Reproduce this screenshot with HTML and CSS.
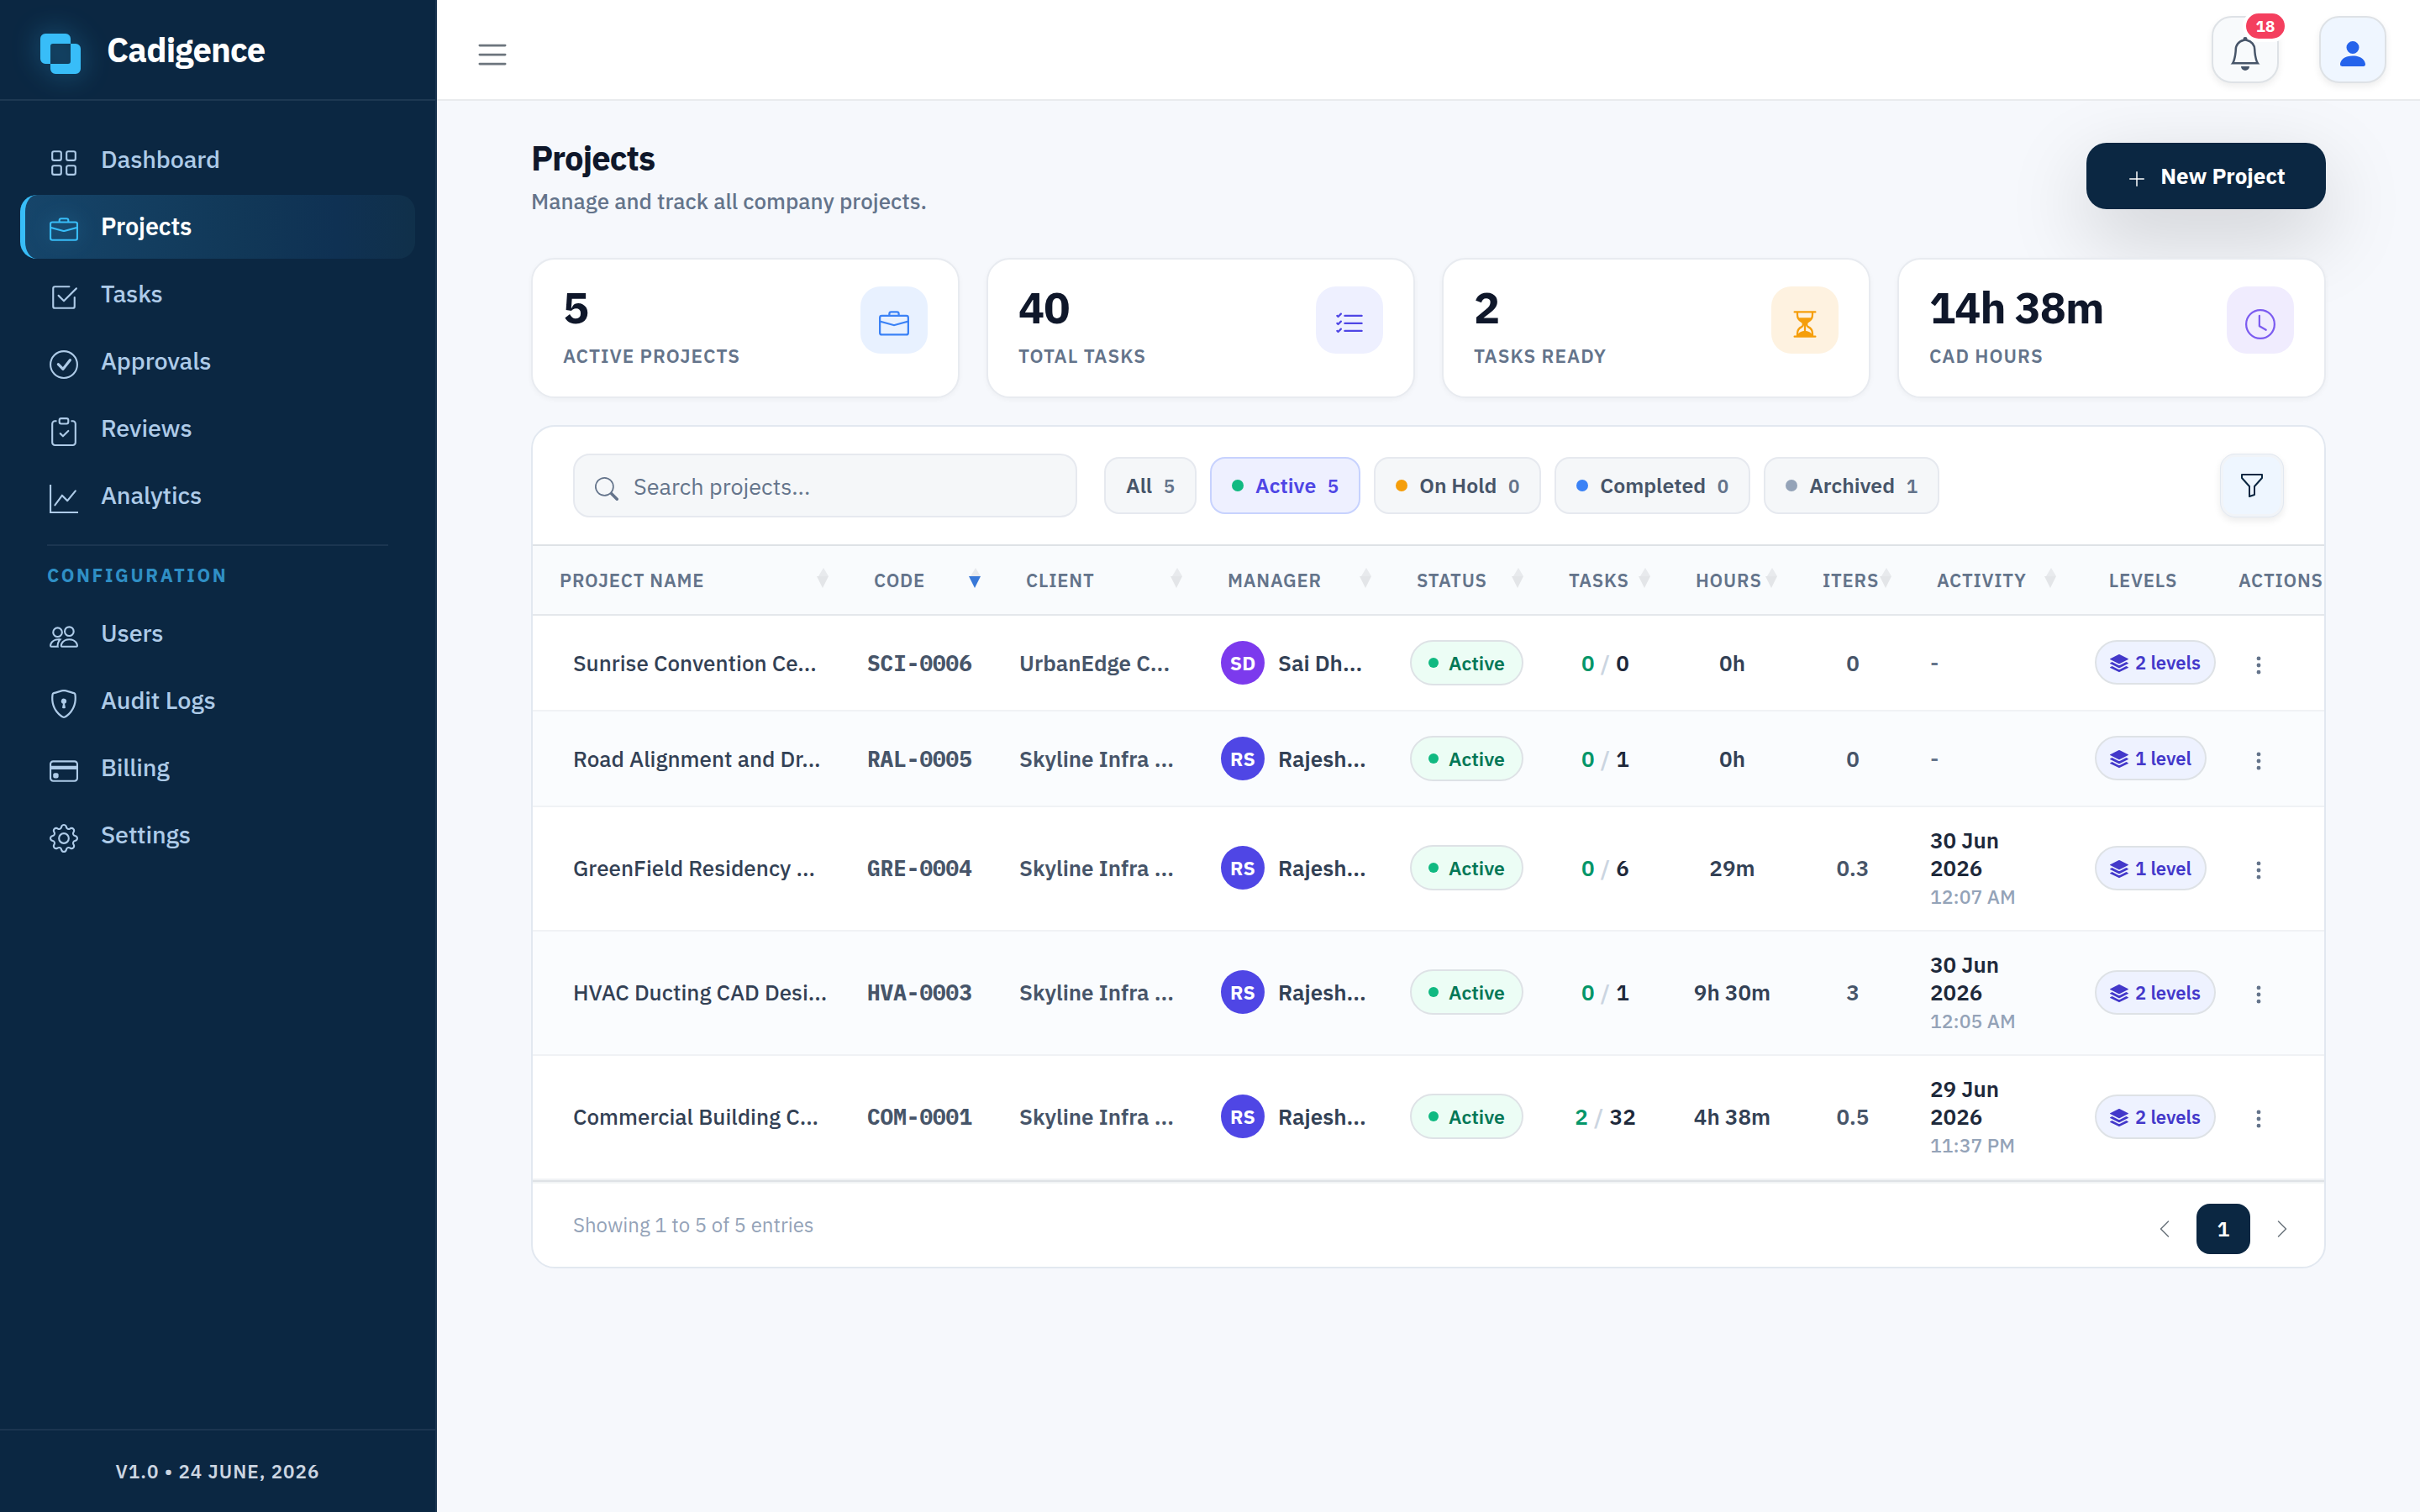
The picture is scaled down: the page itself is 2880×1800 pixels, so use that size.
FILE: index.html
```html
<!DOCTYPE html>
<html lang="en">
<head>
  <meta charset="UTF-8">
  <title>Cadigence - Projects</title>
  <link rel="stylesheet" href="styles.css">
</head>
<body>
  <!-- icon sprite -->
  <svg class="sprite" width="0" height="0">
    <symbol id="i-logo" viewBox="0 0 16 16"><path d="M0 2a2 2 0 0 1 2-2h8a2 2 0 0 1 2 2v2h2a2 2 0 0 1 2 2v8a2 2 0 0 1-2 2H6a2 2 0 0 1-2-2v-2H2a2 2 0 0 1-2-2zm12 2H5a1 1 0 0 0-1 1v7h7a1 1 0 0 0 1-1z"/></symbol>
    <symbol id="i-grid" viewBox="0 0 16 16"><path d="M1 2.5A1.5 1.5 0 0 1 2.5 1h3A1.5 1.5 0 0 1 7 2.5v3A1.5 1.5 0 0 1 5.5 7h-3A1.5 1.5 0 0 1 1 5.5zM2.5 2a.5.5 0 0 0-.5.5v3a.5.5 0 0 0 .5.5h3a.5.5 0 0 0 .5-.5v-3a.5.5 0 0 0-.5-.5zm6.5.5A1.5 1.5 0 0 1 10.5 1h3A1.5 1.5 0 0 1 15 2.5v3A1.5 1.5 0 0 1 13.5 7h-3A1.5 1.5 0 0 1 9 5.5zm1.5-.5a.5.5 0 0 0-.5.5v3a.5.5 0 0 0 .5.5h3a.5.5 0 0 0 .5-.5v-3a.5.5 0 0 0-.5-.5zM1 10.5A1.5 1.5 0 0 1 2.5 9h3A1.5 1.5 0 0 1 7 10.5v3A1.5 1.5 0 0 1 5.5 15h-3A1.5 1.5 0 0 1 1 13.5zm1.5-.5a.5.5 0 0 0-.5.5v3a.5.5 0 0 0 .5.5h3a.5.5 0 0 0 .5-.5v-3a.5.5 0 0 0-.5-.5zm6.5.5A1.5 1.5 0 0 1 10.5 9h3a1.5 1.5 0 0 1 1.5 1.5v3a1.5 1.5 0 0 1-1.5 1.5h-3A1.5 1.5 0 0 1 9 13.5zm1.5-.5a.5.5 0 0 0-.5.5v3a.5.5 0 0 0 .5.5h3a.5.5 0 0 0 .5-.5v-3a.5.5 0 0 0-.5-.5z"/></symbol>
    <symbol id="i-briefcase" viewBox="0 0 16 16"><path d="M6.5 1A1.5 1.5 0 0 0 5 2.5V3H1.5A1.5 1.5 0 0 0 0 4.5v8A1.5 1.5 0 0 0 1.5 14h13a1.5 1.5 0 0 0 1.5-1.5v-8A1.5 1.5 0 0 0 14.5 3H11v-.5A1.5 1.5 0 0 0 9.5 1zm0 1h3a.5.5 0 0 1 .5.5V3H6v-.5a.5.5 0 0 1 .5-.5m1.886 6.914L15 7.151V12.5a.5.5 0 0 1-.5.5h-13a.5.5 0 0 1-.5-.5V7.15l6.614 1.764a1.5 1.5 0 0 0 .772 0M1.5 4h13a.5.5 0 0 1 .5.5v1.616L8.129 7.948a.5.5 0 0 1-.258 0L1 6.116V4.5a.5.5 0 0 1 .5-.5"/></symbol>
    <symbol id="i-check-square" viewBox="0 0 16 16"><path d="M3 14.5A1.5 1.5 0 0 1 1.5 13V3A1.5 1.5 0 0 1 3 1.5h8a.5.5 0 0 1 0 1H3a.5.5 0 0 0-.5.5v10a.5.5 0 0 0 .5.5h10a.5.5 0 0 0 .5-.5V8a.5.5 0 0 1 1 0v5a1.5 1.5 0 0 1-1.5 1.5z"/><path d="m8.354 10.354 7-7a.5.5 0 0 0-.708-.708L8 9.293 5.354 6.646a.5.5 0 1 0-.708.708l3 3a.5.5 0 0 0 .708 0"/></symbol>
    <symbol id="i-check-circle" viewBox="0 0 16 16"><path d="M8 15A7 7 0 1 1 8 1a7 7 0 0 1 0 14m0 1A8 8 0 1 0 8 0a8 8 0 0 0 0 16"/><path d="m10.97 4.97-.02.022-3.473 4.425-2.093-2.094a.75.75 0 0 0-1.06 1.06L6.97 11.03a.75.75 0 0 0 1.079-.02l3.992-4.99a.75.75 0 0 0-1.071-1.05"/></symbol>
    <symbol id="i-clipboard" viewBox="0 0 16 16"><path fill-rule="evenodd" d="M10.854 7.146a.5.5 0 0 1 0 .708l-3 3a.5.5 0 0 1-.708 0l-1.5-1.5a.5.5 0 1 1 .708-.708L7.5 9.793l2.646-2.647a.5.5 0 0 1 .708 0"/><path d="M4 1.5H3a2 2 0 0 0-2 2V14a2 2 0 0 0 2 2h10a2 2 0 0 0 2-2V3.5a2 2 0 0 0-2-2h-1v1h1a1 1 0 0 1 1 1V14a1 1 0 0 1-1 1H3a1 1 0 0 1-1-1V3.5a1 1 0 0 1 1-1h1z"/><path d="M9.5 1a.5.5 0 0 1 .5.5v1a.5.5 0 0 1-.5.5h-3a.5.5 0 0 1-.5-.5v-1a.5.5 0 0 1 .5-.5zm-3-1A1.5 1.5 0 0 0 5 1.5v1A1.5 1.5 0 0 0 6.5 4h3A1.5 1.5 0 0 0 11 2.5v-1A1.5 1.5 0 0 0 9.5 0z"/></symbol>
    <symbol id="i-graph" viewBox="0 0 16 16"><path fill-rule="evenodd" d="M0 0h1v15h15v1H0zm14.817 3.113a.5.5 0 0 1 .07.704l-4.5 5.5a.5.5 0 0 1-.74.037L7.06 6.767l-3.656 5.027a.5.5 0 0 1-.808-.588l4-5.5a.5.5 0 0 1 .758-.06l2.609 2.61 4.15-5.073a.5.5 0 0 1 .704-.07"/></symbol>
    <symbol id="i-people" viewBox="0 0 16 16"><path d="M15 14s1 0 1-1-1-4-5-4-5 3-5 4 1 1 1 1zm-7.978-1L7 12.996c.001-.264.167-1.03.76-1.72C8.312 10.629 9.282 10 11 10c1.717 0 2.687.63 3.24 1.276.593.69.758 1.457.76 1.72l-.008.002-.014.002zM11 7a2 2 0 1 0 0-4 2 2 0 0 0 0 4m3-2a3 3 0 1 1-6 0 3 3 0 0 1 6 0M6.936 9.28a6 6 0 0 0-1.23-.247A7 7 0 0 0 5 9c-4 0-5 3-5 4q0 1 1 1h4.216A2.24 2.24 0 0 1 5 13c0-1.01.377-2.042 1.09-2.904.243-.294.526-.569.846-.816M4.92 10A5.5 5.5 0 0 0 4 13H1c0-.26.164-1.03.76-1.724.545-.636 1.492-1.256 3.16-1.275ZM1.5 5.5a3 3 0 1 1 6 0 3 3 0 0 1-6 0m3-2a2 2 0 1 0 0 4 2 2 0 0 0 0-4"/></symbol>
    <symbol id="i-shield" viewBox="0 0 16 16"><path d="M5.338 1.59a61 61 0 0 0-2.837.856.48.48 0 0 0-.328.39c-.554 4.157.726 7.19 2.253 9.188a10.7 10.7 0 0 0 2.287 2.233c.346.244.652.42.893.533q.18.085.293.118a1 1 0 0 0 .101.025 1 1 0 0 0 .1-.025q.114-.034.294-.118c.24-.113.547-.29.893-.533a10.7 10.7 0 0 0 2.287-2.233c1.527-1.997 2.807-5.031 2.253-9.188a.48.48 0 0 0-.328-.39c-.651-.213-1.75-.56-2.837-.855C9.552 1.29 8.531 1.067 8 1.067c-.53 0-1.552.223-2.662.524zM5.072.56C6.157.265 7.31 0 8 0s1.843.265 2.928.56c1.11.3 2.229.655 2.887.87a1.54 1.54 0 0 1 1.044 1.262c.596 4.477-.787 7.795-2.465 9.99a11.8 11.8 0 0 1-2.517 2.453 7 7 0 0 1-1.048.625c-.28.132-.581.24-.829.24s-.548-.108-.829-.24a7 7 0 0 1-1.048-.625 11.8 11.8 0 0 1-2.517-2.453C1.928 10.487.545 7.169 1.141 2.692A1.54 1.54 0 0 1 2.185 1.43 63 63 0 0 1 5.072.56"/><path d="M9.5 6.5a1.5 1.5 0 0 1-1 1.415l.385 1.99a.5.5 0 0 1-.491.595h-.788a.5.5 0 0 1-.49-.595l.384-1.99a1.5 1.5 0 1 1 2-1.415"/></symbol>
    <symbol id="i-card" viewBox="0 0 16 16"><path d="M0 4a2 2 0 0 1 2-2h12a2 2 0 0 1 2 2v8a2 2 0 0 1-2 2H2a2 2 0 0 1-2-2zm2-1a1 1 0 0 0-1 1v1h14V4a1 1 0 0 0-1-1zm13 4H1v5a1 1 0 0 0 1 1h12a1 1 0 0 0 1-1z"/><path d="M2 10a1 1 0 0 1 1-1h1a1 1 0 0 1 1 1v1a1 1 0 0 1-1 1H3a1 1 0 0 1-1-1z"/></symbol>
    <symbol id="i-gear" viewBox="0 0 16 16"><path d="M8 4.754a3.246 3.246 0 1 0 0 6.492 3.246 3.246 0 0 0 0-6.492M5.754 8a2.246 2.246 0 1 1 4.492 0 2.246 2.246 0 0 1-4.492 0"/><path d="M9.796 1.343c-.527-1.79-3.065-1.79-3.592 0l-.094.319a.873.873 0 0 1-1.255.52l-.292-.16c-1.64-.892-3.433.902-2.54 2.541l.159.292a.873.873 0 0 1-.52 1.255l-.319.094c-1.79.527-1.79 3.065 0 3.592l.319.094a.873.873 0 0 1 .52 1.255l-.16.292c-.892 1.64.901 3.434 2.541 2.54l.292-.159a.873.873 0 0 1 1.255.52l.094.319c.527 1.79 3.065 1.79 3.592 0l.094-.319a.873.873 0 0 1 1.255-.52l.292.16c1.64.893 3.434-.902 2.54-2.541l-.159-.292a.873.873 0 0 1 .52-1.255l.319-.094c1.79-.527 1.79-3.065 0-3.592l-.319-.094a.873.873 0 0 1-.52-1.255l.16-.292c.893-1.64-.902-3.433-2.541-2.54l-.292.159a.873.873 0 0 1-1.255-.52zm-2.633.283c.246-.835 1.428-.835 1.674 0l.094.319a1.873 1.873 0 0 0 2.693 1.115l.291-.16c.764-.415 1.6.42 1.184 1.185l-.159.292a1.873 1.873 0 0 0 1.116 2.692l.318.094c.835.246.835 1.428 0 1.674l-.319.094a1.873 1.873 0 0 0-1.115 2.693l.16.291c.415.764-.42 1.6-1.185 1.184l-.291-.159a1.873 1.873 0 0 0-2.693 1.116l-.094.318c-.246.835-1.428.835-1.674 0l-.094-.319a1.873 1.873 0 0 0-2.692-1.115l-.292.16c-.764.415-1.6-.42-1.184-1.185l.159-.291A1.873 1.873 0 0 0 1.945 8.93l-.319-.094c-.835-.246-.835-1.428 0-1.674l.319-.094A1.873 1.873 0 0 0 3.06 4.377l-.16-.292c-.415-.764.42-1.6 1.185-1.184l.292.159a1.873 1.873 0 0 0 2.692-1.115z"/></symbol>
    <symbol id="i-list" viewBox="0 0 16 16"><path d="M2 12a.5.5 0 0 1 .5-.5h11a.5.5 0 0 1 0 1h-11A.5.5 0 0 1 2 12m0-4a.5.5 0 0 1 .5-.5h11a.5.5 0 0 1 0 1h-11A.5.5 0 0 1 2 8m0-4a.5.5 0 0 1 .5-.5h11a.5.5 0 0 1 0 1h-11A.5.5 0 0 1 2 4"/></symbol>
    <symbol id="i-bell" viewBox="0 0 16 16"><path d="M8 16a2 2 0 0 0 2-2H6a2 2 0 0 0 2 2M8 1.918l-.797.161A4 4 0 0 0 4 6c0 .628-.134 2.197-.459 3.742-.16.767-.376 1.566-.663 2.258h10.244c-.287-.692-.502-1.49-.663-2.258C12.134 8.197 12 6.628 12 6a4 4 0 0 0-3.203-3.92zM14.22 12c.223.447.481.801.78 1H1c.299-.199.557-.553.78-1C2.68 10.2 3 6.88 3 6c0-2.42 1.72-4.44 4.005-4.901a1 1 0 1 1 1.99 0A5 5 0 0 1 13 6c0 .88.32 4.2 1.22 6"/></symbol>
    <symbol id="i-person" viewBox="0 0 16 16"><path d="M3 14s-1 0-1-1 1-4 6-4 6 3 6 4-1 1-1 1zm5-6a3 3 0 1 0 0-6 3 3 0 0 0 0 6"/></symbol>
    <symbol id="i-plus" viewBox="0 0 16 16"><path d="M8 2a.5.5 0 0 1 .5.5v5h5a.5.5 0 0 1 0 1h-5v5a.5.5 0 0 1-1 0v-5h-5a.5.5 0 0 1 0-1h5v-5A.5.5 0 0 1 8 2"/></symbol>
    <symbol id="i-checklist" viewBox="0 0 16 16"><path d="M5 11.5a.5.5 0 0 1 .5-.5h9a.5.5 0 0 1 0 1h-9a.5.5 0 0 1-.5-.5m0-4a.5.5 0 0 1 .5-.5h9a.5.5 0 0 1 0 1h-9a.5.5 0 0 1-.5-.5m0-4a.5.5 0 0 1 .5-.5h9a.5.5 0 0 1 0 1h-9a.5.5 0 0 1-.5-.5M3.854 2.146a.5.5 0 0 1 0 .708l-1.5 1.5a.5.5 0 0 1-.708 0l-.5-.5a.5.5 0 1 1 .708-.708L2 3.293l1.146-1.147a.5.5 0 0 1 .708 0m0 4a.5.5 0 0 1 0 .708l-1.5 1.5a.5.5 0 0 1-.708 0l-.5-.5a.5.5 0 1 1 .708-.708L2 7.293l1.146-1.147a.5.5 0 0 1 .708 0m0 4a.5.5 0 0 1 0 .708l-1.5 1.5a.5.5 0 0 1-.708 0l-.5-.5a.5.5 0 0 1 .708-.708l.146.147 1.146-1.147a.5.5 0 0 1 .708 0"/></symbol>
    <symbol id="i-hourglass" viewBox="0 0 16 16"><path d="M2.5 15a.5.5 0 1 1 0-1h1v-1a4.5 4.5 0 0 1 2.557-4.06c.29-.139.443-.377.443-.59v-.7c0-.213-.154-.451-.443-.59A4.5 4.5 0 0 1 3.5 3V2h-1a.5.5 0 0 1 0-1h11a.5.5 0 0 1 0 1h-1v1a4.5 4.5 0 0 1-2.557 4.06c-.29.139-.443.377-.443.59v.7c0 .213.154.451.443.59A4.5 4.5 0 0 1 12.5 13v1h1a.5.5 0 0 1 0 1zm2-13v1c0 .537.12 1.045.337 1.5h6.326c.216-.455.337-.963.337-1.5V2zm3 6.35c0 .701-.478 1.236-1.011 1.492A3.5 3.5 0 0 0 4.5 13s.866-1.299 3-1.48zm1 0v3.17c2.134.181 3 1.48 3 1.48a3.5 3.5 0 0 0-1.989-3.158C8.978 9.586 8.5 9.052 8.5 8.351z"/></symbol>
    <symbol id="i-clock" viewBox="0 0 16 16"><path d="M8 3.5a.5.5 0 0 0-1 0V9a.5.5 0 0 0 .252.434l3.5 2a.5.5 0 0 0 .496-.868L8 8.71z"/><path d="M8 16A8 8 0 1 0 8 0a8 8 0 0 0 0 16m7-8A7 7 0 1 1 1 8a7 7 0 0 1 14 0"/></symbol>
    <symbol id="i-search" viewBox="0 0 16 16"><path d="M11.742 10.344a6.5 6.5 0 1 0-1.397 1.398h-.001q.044.06.098.115l3.85 3.85a1 1 0 0 0 1.415-1.414l-3.85-3.85a1 1 0 0 0-.115-.1zM12 6.5a5.5 5.5 0 1 1-11 0 5.5 5.5 0 0 1 11 0"/></symbol>
    <symbol id="i-funnel" viewBox="0 0 16 16"><path d="M1.5 1.5A.5.5 0 0 1 2 1h12a.5.5 0 0 1 .5.5v2a.5.5 0 0 1-.128.334L10 8.692V13.5a.5.5 0 0 1-.342.474l-3 1A.5.5 0 0 1 6 14.5V8.692L1.628 3.834A.5.5 0 0 1 1.5 3.5zm1 .5v1.308l4.372 4.858A.5.5 0 0 1 7 8.5v5.306l2-.666V8.5a.5.5 0 0 1 .128-.334L13.5 3.308V2z"/></symbol>
    <symbol id="i-stack" viewBox="0 0 16 16"><path d="m14.12 10.163 1.715.858c.22.11.22.424 0 .534L8.267 15.34a.6.6 0 0 1-.534 0L.165 11.555a.299.299 0 0 1 0-.534l1.716-.858 5.317 2.659c.505.252 1.1.252 1.604 0l5.317-2.66zM7.733.063a.6.6 0 0 1 .534 0l7.568 3.784a.3.3 0 0 1 0 .535L8.267 8.165a.6.6 0 0 1-.534 0L.165 4.382a.299.299 0 0 1 0-.535z"/><path d="m14.12 6.576 1.715.858c.22.11.22.424 0 .534l-7.568 3.784a.6.6 0 0 1-.534 0L.165 7.968a.299.299 0 0 1 0-.534l1.716-.858 5.317 2.659c.505.252 1.1.252 1.604 0z"/></symbol>
    <symbol id="i-dots" viewBox="0 0 16 16"><path d="M9.5 13a1.5 1.5 0 1 1-3 0 1.5 1.5 0 0 1 3 0m0-5a1.5 1.5 0 1 1-3 0 1.5 1.5 0 0 1 3 0m0-5a1.5 1.5 0 1 1-3 0 1.5 1.5 0 0 1 3 0"/></symbol>
    <symbol id="i-left" viewBox="0 0 16 16"><path d="M11.354 1.646a.5.5 0 0 1 0 .708L5.707 8l5.647 5.646a.5.5 0 0 1-.708.708l-6-6a.5.5 0 0 1 0-.708l6-6a.5.5 0 0 1 .708 0"/></symbol>
    <symbol id="i-right" viewBox="0 0 16 16"><path d="M4.646 1.646a.5.5 0 0 1 .708 0l6 6a.5.5 0 0 1 0 .708l-6 6a.5.5 0 0 1-.708-.708L10.293 8 4.646 2.354a.5.5 0 0 1 0-.708"/></symbol>
  </svg>

  <div class="app">
    <aside class="sidebar">
      <div class="brand">
        <svg class="brand-logo"><use href="#i-logo"/></svg>
        <span class="brand-name">Cadigence</span>
      </div>
      <nav class="nav">
        <a class="nav-item"><svg><use href="#i-grid"/></svg><span>Dashboard</span></a>
        <a class="nav-item active"><svg><use href="#i-briefcase"/></svg><span>Projects</span></a>
        <a class="nav-item"><svg><use href="#i-check-square"/></svg><span>Tasks</span></a>
        <a class="nav-item"><svg><use href="#i-check-circle"/></svg><span>Approvals</span></a>
        <a class="nav-item"><svg><use href="#i-clipboard"/></svg><span>Reviews</span></a>
        <a class="nav-item"><svg><use href="#i-graph"/></svg><span>Analytics</span></a>
        <div class="nav-heading">CONFIGURATION</div>
        <a class="nav-item"><svg><use href="#i-people"/></svg><span>Users</span></a>
        <a class="nav-item"><svg><use href="#i-shield"/></svg><span>Audit Logs</span></a>
        <a class="nav-item"><svg><use href="#i-card"/></svg><span>Billing</span></a>
        <a class="nav-item"><svg><use href="#i-gear"/></svg><span>Settings</span></a>
      </nav>
      <div class="sidebar-footer">V1.0 • 24 JUNE, 2026</div>
    </aside>

    <div class="main">
      <header class="topbar">
        <svg class="menu-toggle"><use href="#i-list"/></svg>
        <div class="topbar-actions">
          <button class="icon-btn bell"><svg><use href="#i-bell"/></svg><span class="badge">18</span></button>
          <button class="icon-btn user"><svg><use href="#i-person"/></svg></button>
        </div>
      </header>

      <main class="content">
        <div class="page-header">
          <div>
            <h1>Projects</h1>
            <p>Manage and track all company projects.</p>
          </div>
          <button class="btn-new"><svg><use href="#i-plus"/></svg>New Project</button>
        </div>

        <section class="stats">
          <div class="stat">
            <div><div class="stat-value">5</div><div class="stat-label">ACTIVE PROJECTS</div></div>
            <div class="stat-icon blue"><svg><use href="#i-briefcase"/></svg></div>
          </div>
          <div class="stat">
            <div><div class="stat-value">40</div><div class="stat-label">TOTAL TASKS</div></div>
            <div class="stat-icon indigo"><svg><use href="#i-checklist"/></svg></div>
          </div>
          <div class="stat">
            <div><div class="stat-value">2</div><div class="stat-label">TASKS READY</div></div>
            <div class="stat-icon amber"><svg><use href="#i-hourglass"/></svg></div>
          </div>
          <div class="stat">
            <div><div class="stat-value">14h 38m</div><div class="stat-label">CAD HOURS</div></div>
            <div class="stat-icon violet"><svg><use href="#i-clock"/></svg></div>
          </div>
        </section>

        <section class="panel">
          <div class="toolbar">
            <div class="search"><svg><use href="#i-search"/></svg><span>Search projects...</span></div>
            <div class="pills">
              <div class="pill">All <b>5</b></div>
              <div class="pill selected"><i class="dot green"></i>Active <b>5</b></div>
              <div class="pill"><i class="dot orange"></i>On Hold <b>0</b></div>
              <div class="pill"><i class="dot sky"></i>Completed <b>0</b></div>
              <div class="pill"><i class="dot gray"></i>Archived <b>1</b></div>
            </div>
            <button class="filter-btn"><svg><use href="#i-funnel"/></svg></button>
          </div>

          <table class="grid">
            <colgroup>
              <col class="c-name"><col class="c-code"><col class="c-client"><col class="c-manager"><col class="c-status"><col class="c-tasks"><col class="c-hours"><col class="c-iters"><col class="c-activity"><col class="c-levels"><col class="c-actions">
            </colgroup>
            <thead>
              <tr>
                <th><div class="th">PROJECT NAME<i class="sort"></i></div></th>
                <th><div class="th">CODE<i class="sort desc"></i></div></th>
                <th><div class="th">CLIENT<i class="sort"></i></div></th>
                <th><div class="th">MANAGER<i class="sort"></i></div></th>
                <th><div class="th">STATUS<i class="sort"></i></div></th>
                <th><div class="th">TASKS<i class="sort"></i></div></th>
                <th><div class="th">HOURS<i class="sort"></i></div></th>
                <th><div class="th">ITERS<i class="sort"></i></div></th>
                <th><div class="th">ACTIVITY<i class="sort"></i></div></th>
                <th class="center">LEVELS</th>
                <th>ACTIONS</th>
              </tr>
            </thead>
            <tbody>
              <tr>
                <td class="name">Sunrise Convention Ce...</td>
                <td class="code">SCI-0006</td>
                <td class="client">UrbanEdge C...</td>
                <td><div class="manager"><span class="avatar purple">SD</span>Sai Dh...</div></td>
                <td><span class="status">Active</span></td>
                <td class="tasks"><em>0</em> <i>/</i> 0</td>
                <td class="hours">0h</td>
                <td class="iters">0</td>
                <td class="none">-</td>
                <td><span class="levels"><svg><use href="#i-stack"/></svg>2 levels</span></td>
                <td class="actions"><svg><use href="#i-dots"/></svg></td>
              </tr>
              <tr>
                <td class="name">Road Alignment and Dr...</td>
                <td class="code">RAL-0005</td>
                <td class="client">Skyline Infra ...</td>
                <td><div class="manager"><span class="avatar">RS</span>Rajesh...</div></td>
                <td><span class="status">Active</span></td>
                <td class="tasks"><em>0</em> <i>/</i> 1</td>
                <td class="hours">0h</td>
                <td class="iters">0</td>
                <td class="none">-</td>
                <td><span class="levels"><svg><use href="#i-stack"/></svg>1 level</span></td>
                <td class="actions"><svg><use href="#i-dots"/></svg></td>
              </tr>
              <tr class="tall">
                <td class="name">GreenField Residency ...</td>
                <td class="code">GRE-0004</td>
                <td class="client">Skyline Infra ...</td>
                <td><div class="manager"><span class="avatar">RS</span>Rajesh...</div></td>
                <td><span class="status">Active</span></td>
                <td class="tasks"><em>0</em> <i>/</i> 6</td>
                <td class="hours">29m</td>
                <td class="iters">0.3</td>
                <td class="activity">30 Jun<br>2026<small>12:07 AM</small></td>
                <td><span class="levels"><svg><use href="#i-stack"/></svg>1 level</span></td>
                <td class="actions"><svg><use href="#i-dots"/></svg></td>
              </tr>
              <tr class="tall">
                <td class="name">HVAC Ducting CAD Desi...</td>
                <td class="code">HVA-0003</td>
                <td class="client">Skyline Infra ...</td>
                <td><div class="manager"><span class="avatar">RS</span>Rajesh...</div></td>
                <td><span class="status">Active</span></td>
                <td class="tasks"><em>0</em> <i>/</i> 1</td>
                <td class="hours">9h 30m</td>
                <td class="iters">3</td>
                <td class="activity">30 Jun<br>2026<small>12:05 AM</small></td>
                <td><span class="levels"><svg><use href="#i-stack"/></svg>2 levels</span></td>
                <td class="actions"><svg><use href="#i-dots"/></svg></td>
              </tr>
              <tr class="tall">
                <td class="name">Commercial Building C...</td>
                <td class="code">COM-0001</td>
                <td class="client">Skyline Infra ...</td>
                <td><div class="manager"><span class="avatar">RS</span>Rajesh...</div></td>
                <td><span class="status">Active</span></td>
                <td class="tasks"><em>2</em> <i>/</i> 32</td>
                <td class="hours">4h 38m</td>
                <td class="iters">0.5</td>
                <td class="activity">29 Jun<br>2026<small>11:37 PM</small></td>
                <td><span class="levels"><svg><use href="#i-stack"/></svg>2 levels</span></td>
                <td class="actions"><svg><use href="#i-dots"/></svg></td>
              </tr>
            </tbody>
          </table>

          <div class="panel-footer">
            <span class="showing">Showing 1 to 5 of 5 entries</span>
            <div class="pager">
              <svg><use href="#i-left"/></svg>
              <span class="page-current">1</span>
              <svg><use href="#i-right"/></svg>
            </div>
          </div>
        </section>
      </main>
    </div>
  </div>
</body>
</html>
```
FILE: styles.css
```css
* {
  box-sizing: border-box;
}

body {
  margin: 0;
  font-family: "IBM Plex Sans", Roboto, "Noto Sans", sans-serif;
  font-size: 26px;
  color: #0f172a;
  background-color: #f6f8fc;
}

svg {
  display: block;
  fill: currentColor;
  flex-shrink: 0;
}

.sprite {
  display: none;
}

button {
  font-family: inherit;
  padding: 0;
  border: none;
}

.app {
  display: flex;
  height: 1800px;
}

/* Sidebar */
.sidebar {
  width: 520px;
  background-color: #0b2742;
  border-right: 2px solid #1b3550;
  display: flex;
  flex-direction: column;
}

.brand {
  height: 120px;
  padding: 10px 0 0 48px;
  border-bottom: 2px solid #1d3852;
  display: flex;
  align-items: center;
  gap: 31px;
}

.brand-logo {
  width: 48px;
  height: 48px;
  color: #38bdf8;
  filter: drop-shadow(0 0 16px rgba(56, 189, 248, 0.4));
}

.brand-name {
  color: #ffffff;
  font-size: 40px;
  font-weight: 700;
  line-height: 48px;
  letter-spacing: -0.8px;
  margin-bottom: 10px;
}

.nav {
  flex: 1;
  padding: 32px 24px 0;
  display: flex;
  flex-direction: column;
  gap: 4px;
}

.nav-item {
  height: 76px;
  padding-left: 29px;
  border-left: 6px solid transparent;
  border-radius: 20px;
  display: flex;
  align-items: center;
  gap: 27px;
  color: #aecbe8;
  font-size: 28.8px;
  font-weight: 500;
  letter-spacing: -0.15px;
}

.nav-item span {
  margin-bottom: 2px;
}

.nav-item svg {
  width: 34px;
  height: 34px;
  margin-top: 8px;
}

.nav-item.active {
  color: #ffffff;
  font-weight: 600;
  border-left-color: #38bdf8;
  background: linear-gradient(90deg, #16456a 0%, #113858 55%, #0f3153 80%, #10304a 100%);
}

.nav-item.active svg {
  color: #38bdf8;
  filter: drop-shadow(0 0 12px rgba(56, 189, 248, 0.4));
}

.nav-heading {
  margin: 16px 32px 12px;
  padding-top: 19px;
  border-top: 2px solid #1b3550;
  color: #2f8fc5;
  font-size: 22px;
  font-weight: 700;
  line-height: 31px;
  letter-spacing: 2.6px;
}

.sidebar-footer {
  height: 99px;
  border-top: 2px solid #1b3550;
  display: flex;
  align-items: center;
  justify-content: center;
  color: #cbd5e1;
  font-size: 22.4px;
  font-weight: 600;
  letter-spacing: 1px;
}

/* Topbar */
.main {
  flex: 1;
  display: flex;
  flex-direction: column;
}

.topbar {
  height: 120px;
  padding: 0 40px 0 44px;
  background-color: #ffffff;
  border-bottom: 2px solid #e9ebee;
  display: flex;
  align-items: center;
  justify-content: space-between;
  z-index: 1;
}

.menu-toggle {
  width: 44px;
  height: 44px;
  margin-top: 12px;
  color: #6c757d;
}

.topbar-actions {
  display: flex;
  gap: 48px;
}

.icon-btn {
  position: relative;
  width: 80px;
  height: 80px;
  border: 2px solid #dee2e6;
  border-radius: 24px;
  display: flex;
  align-items: center;
  justify-content: center;
  background-color: #f8fafc;
  color: #475569;
  box-shadow: 0 4px 8px rgba(0, 0, 0, 0.07);
}

.icon-btn svg {
  width: 40px;
  height: 40px;
  margin-top: 10px;
}

.icon-btn.user {
  background-color: #eff6ff;
  color: #2563eb;
}

.badge {
  position: absolute;
  top: -9px;
  right: -13px;
  height: 38px;
  width: 54px;
  border: 4px solid #ffffff;
  border-radius: 19px;
  background-color: #f43f5e;
  color: #ffffff;
  font-size: 19px;
  font-weight: 700;
  line-height: 30px;
  text-align: center;
}

/* Page */
.content {
  padding: 45px 112px 0;
}

.page-header {
  height: 142px;
  display: flex;
  justify-content: space-between;
  align-items: flex-start;
}

h1 {
  margin: 0;
  font-size: 40px;
  font-weight: 700;
  line-height: 47px;
  letter-spacing: -0.9px;
}

.page-header p {
  margin: 9px 0 0;
  color: #64748b;
  font-size: 26px;
  font-weight: 500;
  line-height: 36px;
}

.btn-new {
  width: 285px;
  height: 79px;
  margin-top: 5px;
  padding-bottom: 2px;
  border-radius: 24px;
  background-color: #0b2742;
  color: #ffffff;
  display: flex;
  align-items: center;
  justify-content: center;
  gap: 16px;
  font-size: 26px;
  font-weight: 700;
  box-shadow: 0 32px 96px rgba(0, 0, 0, 0.175);
}

.btn-new svg {
  width: 24px;
  height: 24px;
  margin-top: 8px;
}

.stats {
  display: grid;
  grid-template-columns: repeat(4, 1fr);
  gap: 32px;
}

.stat {
  position: relative;
  height: 167px;
  padding: 26px 36px 0;
  background-color: #ffffff;
  border: 2px solid #e8ebf0;
  border-radius: 28px;
  box-shadow: 0 2px 6px rgba(0, 0, 0, 0.04);
  display: flex;
  justify-content: space-between;
}

.stat-value {
  font-size: 52px;
  font-weight: 700;
  line-height: 62px;
  letter-spacing: -1px;
}

.stat-label {
  margin-top: 10px;
  color: #64748b;
  font-size: 22.5px;
  font-weight: 600;
  line-height: 34px;
  letter-spacing: 1px;
}

.stat-icon {
  width: 80px;
  height: 80px;
  margin-top: 6px;
  border-radius: 24px;
  display: flex;
  align-items: center;
  justify-content: center;
}

.stat-icon svg {
  width: 36px;
  height: 36px;
  margin-top: 10px;
}

.blue { background-color: #e8f1ff; color: #3b82f6; }
.indigo { background-color: #eef0ff; color: #4f46e5; }
.amber { background-color: #fef2e0; color: #f59e0b; }
.violet { background-color: #f0ecfe; color: #7c5cf0; }

/* Projects panel */
.panel {
  position: relative;
  margin-top: 32px;
  height: 1004px;
  background-color: #ffffff;
  border: 2px solid #e2e8f0;
  border-radius: 28px;
  overflow: hidden;
}

.toolbar {
  height: 140px;
  padding: 0 48px;
  display: flex;
  align-items: center;
}

.search {
  width: 600px;
  height: 76px;
  padding-left: 24px;
  border: 2px solid #e6e9ef;
  border-radius: 20px;
  background-color: #f5f7f9;
  color: #64748b;
  display: flex;
  align-items: center;
  gap: 18px;
  font-size: 27px;
}

.search svg {
  width: 28px;
  height: 28px;
  margin-top: 8px;
}

.pills {
  margin-left: 32px;
  display: flex;
  gap: 16px;
}

.pill {
  height: 68px;
  padding: 0 24px;
  border: 2px solid #e6e9ef;
  border-radius: 18px;
  background-color: #f5f7f9;
  color: #475569;
  display: flex;
  align-items: center;
  font-size: 24.8px;
  font-weight: 600;
}

.pill b {
  margin-left: 13.6px;
  color: #64748b;
  font-size: 22.4px;
  font-weight: 600;
}

.pill.selected {
  border-color: #c7d2fe;
  background-color: #eef0ff;
  color: #4f46e5;
}

.pill.selected b {
  color: #4f46e5;
}

.dot {
  width: 14px;
  height: 14px;
  margin-right: 14px;
  border-radius: 50%;
}

.green { background-color: #10b981; }
.orange { background-color: #f59e0b; }
.sky { background-color: #3b82f6; }
.gray { background-color: #94a3b8; }

.filter-btn {
  width: 76px;
  height: 76px;
  margin-left: auto;
  border: 4px solid #f1f4f8;
  outline: 1px solid #e2e8f0;
  outline-offset: -1px;
  border-radius: 18px;
  background-color: #eef6ff;
  color: #0b2742;
  display: flex;
  align-items: center;
  justify-content: center;
  box-shadow: 0 4px 8px rgba(0, 0, 0, 0.08);
}

.filter-btn svg {
  width: 32px;
  height: 32px;
}

.grid {
  width: 2132px;
  table-layout: fixed;
  border-collapse: separate;
  border-spacing: 0;
  border-top: 2px solid #dee2e6;
}

.c-name { width: 374px; }
.c-code { width: 181px; }
.c-client { width: 240px; }
.c-manager { width: 225px; }
.c-status { width: 181px; }
.c-tasks { width: 151px; }
.c-hours { width: 151px; }
.c-iters { width: 136px; }
.c-activity { width: 196px; }
.c-levels { width: 163px; }
.c-actions { width: 134px; }

th {
  height: 83px;
  padding: 0 0 0 32px;
  border-bottom: 2px solid #e4e7eb;
  background-color: #f9fbfd;
  color: #64748b;
  font-size: 22px;
  font-weight: 600;
  letter-spacing: 0.8px;
  text-align: left;
  white-space: nowrap;
}

th.center {
  padding: 0;
  text-align: center;
}

.th {
  display: flex;
  align-items: center;
  justify-content: space-between;
  padding-right: 22px;
}

/* two stacked triangles, the lower one is a bit wider */
.sort {
  height: 24px;
  margin-top: -5px;
  display: flex;
  flex-direction: column;
  align-items: flex-end;
}

.sort::before,
.sort::after {
  content: "";
  border-left: 7px solid transparent;
  border-right: 7px solid transparent;
}

.sort::before {
  border-left-width: 6px;
  border-right-width: 6px;
  border-bottom: 10px solid #e8eaed;
}

.sort::after {
  border-top: 14px solid #e3e5e8;
}

.sort.desc::after {
  border-top-color: #3878d8;
}

td {
  height: 114px;
  padding: 0 0 1px 24px;
  border-bottom: 2px solid #f0f2f5;
  white-space: nowrap;
}

.tall td {
  height: 148px;
  padding-bottom: 2px;
}

tbody tr:nth-child(even) td {
  background-color: #fafcfe;
}

td.name {
  padding-left: 48px;
  color: #334155;
  font-weight: 500;
}

td.code {
  font-family: "IBM Plex Mono", "Liberation Mono", monospace;
  font-size: 26px;
  font-weight: 700;
  color: #475569;
}

td.client {
  color: #475569;
  font-weight: 600;
}

.manager {
  display: flex;
  align-items: center;
  gap: 16px;
  color: #334155;
  font-weight: 600;
}

.avatar {
  width: 52px;
  height: 52px;
  border-radius: 50%;
  background-color: #4f46e5;
  color: #ffffff;
  font-size: 23px;
  font-weight: 700;
  line-height: 52px;
  text-align: center;
}

.avatar.purple {
  background-color: #7c3aed;
}

.status,
.levels {
  display: inline-flex;
  align-items: center;
  border: 2px solid #dee2e6;
  border-radius: 27px;
  font-weight: 600;
  vertical-align: middle;
}

.status {
  height: 54px;
  padding: 0 20px;
  background-color: #ecfdf5;
  color: #047857;
  font-size: 23px;
}

.status::before {
  content: "";
  width: 12px;
  height: 12px;
  margin-right: 12px;
  border-radius: 50%;
  background-color: #10b981;
}

.levels {
  height: 53px;
  padding: 0 16px;
  gap: 8px;
  background-color: #eef2ff;
  color: #4338ca;
  font-size: 22px;
}

.levels svg {
  width: 22px;
  height: 22px;
  margin-top: 3px;
}

td.tasks,
td.hours,
td.iters {
  padding-left: 0;
  text-align: center;
  font-weight: 600;
  color: #334155;
}

td.iters {
  color: #475569;
}

td.tasks {
  color: #1e293b;
}

td.tasks em {
  font-style: normal;
  color: #059669;
}

td.tasks i {
  margin: 0 1px;
  font-style: normal;
  color: #cbd5e1;
}

td.none {
  color: #64748b;
  font-weight: 500;
}

td.activity {
  padding-bottom: 0;
  color: #1e293b;
  font-size: 26px;
  font-weight: 600;
  line-height: 33px;
}

.activity small {
  display: block;
  color: #94a3b8;
  font-size: 23px;
  font-weight: 500;
  line-height: 34px;
}

td.actions {
  padding-left: 43px;
  color: #64748b;
}

.actions svg {
  width: 26px;
  height: 26px;
  margin-top: 6px;
}

.panel-footer {
  height: 104px;
  padding: 9px 38px 0 48px;
  border-top: 2px solid #dee2e6;
  box-shadow: inset 0 2px 0 #f1f4f5;
  display: flex;
  align-items: center;
  justify-content: space-between;
}

.showing {
  margin-bottom: 9px;
  color: #94a3b8;
  font-size: 24px;
}

.pager {
  display: flex;
  align-items: center;
  gap: 26px;
  color: #6c757d;
}

.pager svg {
  width: 24px;
  height: 24px;
}

.page-current {
  width: 64px;
  height: 60px;
  border-radius: 16px;
  background-color: #0b2742;
  color: #ffffff;
  font-size: 25px;
  font-weight: 600;
  line-height: 60px;
  text-align: center;
}
```
